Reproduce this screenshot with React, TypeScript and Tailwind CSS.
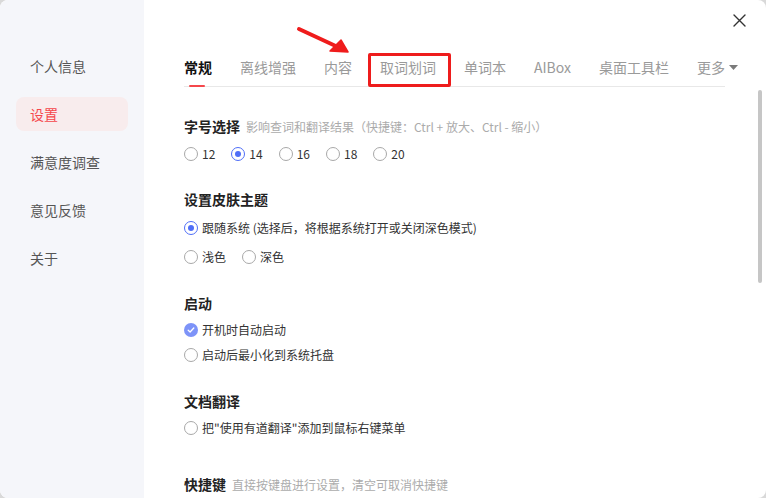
import React from "react";

const menu = ["个人信息", "设置", "满意度调查", "意见反馈", "关于"];
const tabs = ["常规", "离线增强", "内容", "取词划词", "单词本", "AIBox", "桌面工具栏"];

function Radio({ checked = false, label }: { checked?: boolean; label: string }) {
  return (
    <label className="flex items-center gap-[4px] h-[20px] whitespace-nowrap">
      <span
        className={
          checked
            ? "flex h-[14px] w-[14px] items-center justify-center rounded-full border border-[#4f6ef7]"
            : "h-[14px] w-[14px] rounded-full border border-[#a8a8a8]"
        }
      >
        {checked && <span className="h-[6px] w-[6px] rounded-full bg-[#4f6ef7]" />}
      </span>
      <span className="text-[12px] leading-[20px] text-[#333]">{label}</span>
    </label>
  );
}

function Check({ label }: { label: string }) {
  return (
    <label className="flex items-center gap-[4px] h-[20px] whitespace-nowrap">
      <span className="flex h-[14px] w-[14px] items-center justify-center rounded-full bg-[#7d93f8]">
        <svg width="8" height="8" viewBox="0 0 8 8" fill="none">
          <path d="M1.2 4.2 3.1 6 6.8 2" stroke="#fff" strokeWidth="1.3" strokeLinecap="round" strokeLinejoin="round" />
        </svg>
      </span>
      <span className="text-[12px] leading-[20px] text-[#333]">{label}</span>
    </label>
  );
}

function Title({ text, hint }: { text: string; hint?: string }) {
  return (
    <div className="flex items-baseline gap-[6px] h-[20px] leading-[20px] whitespace-nowrap">
      <span className="text-[14px] font-bold text-[#222]">{text}</span>
      {hint && <span className="text-[12px] text-[#ababab]">{hint}</span>}
    </div>
  );
}

export default function App() {
  return (
    <div className="h-[498px] w-[766px] bg-[#d9d9d9] font-['Noto_Sans_CJK_SC','Noto_Sans',sans-serif]">
      <div className="relative flex h-full w-full overflow-hidden rounded-[8px] bg-white">
        <aside className="flex w-[144px] shrink-0 flex-col gap-[14px] bg-[#f5f6fa] px-[16px] pt-[49px]">
          {menu.map((m) => (
            <div
              key={m}
              className={
                m === "设置"
                  ? "flex h-[34px] items-center rounded-[8px] bg-[#f8eced] pl-[14px] text-[14px] text-[#f5474b]"
                  : "flex h-[34px] items-center pl-[14px] text-[14px] text-[#555]"
              }
            >
              {m}
            </div>
          ))}
        </aside>

        <main className="min-w-0 flex-1 pl-[40px] pr-[41px] pt-[54px]">
          <div className="flex h-[33px] gap-[28px] border-b border-[#e8e8e8]">
            {tabs.map((t, i) => (
              <div
                key={t}
                className={
                  i === 0
                    ? "relative shrink-0 whitespace-nowrap pt-[3px] text-[14px] leading-[20px] font-bold text-[#111]"
                    : "relative shrink-0 whitespace-nowrap pt-[3px] text-[14px] leading-[20px] text-[#9a9a9a]"
                }
              >
                {t}
                {i === 0 && (
                  <span className="absolute bottom-[-1px] left-[5px] h-[2px] w-[16px] rounded-full bg-[#f5474b]" />
                )}
                {t === "取词划词" && (
                  <span className="absolute left-[-12px] right-[-15px] top-[-1px] bottom-[-1px] rounded-[2px] border-[3px] border-[#ee1c1c]" />
                )}
              </div>
            ))}
            <div className="flex shrink-0 items-start gap-[4px] whitespace-nowrap pt-[3px] text-[14px] leading-[20px] text-[#9a9a9a]">
              更多
              <svg className="mt-[8px]" width="9" height="5" viewBox="0 0 9 5">
                <path d="M0 0h9L4.5 5z" fill="#7a7a7a" />
              </svg>
            </div>
          </div>

          <div className="mt-[29px]">
            <Title text="字号选择" hint="影响查词和翻译结果（快捷键：Ctrl + 放大、Ctrl - 缩小）" />
          </div>
          <div className="mt-[8px] flex gap-[16px]">
            <Radio label="12" />
            <Radio label="14" checked />
            <Radio label="16" />
            <Radio label="18" />
            <Radio label="20" />
          </div>

          <div className="mt-[25px]">
            <Title text="设置皮肤主题" />
          </div>
          <div className="mt-[9px]">
            <Radio label="跟随系统 (选择后，将根据系统打开或关闭深色模式)" checked />
          </div>
          <div className="mt-[9px] flex gap-[16px]">
            <Radio label="浅色" />
            <Radio label="深色" />
          </div>

          <div className="mt-[26px]">
            <Title text="启动" />
          </div>
          <div className="mt-[7px]">
            <Check label="开机时自动启动" />
          </div>
          <div className="mt-[5px]">
            <Radio label="启动后最小化到系统托盘" />
          </div>

          <div className="mt-[26px]">
            <Title text="文档翻译" />
          </div>
          <div className="mt-[7px]">
            <Radio label={'把"使用有道翻译"添加到鼠标右键菜单'} />
          </div>

          <div className="mt-[36px]">
            <Title text="快捷键" hint="直接按键盘进行设置，清空可取消快捷键" />
          </div>
        </main>

        {/* close button */}
        <button className="absolute left-[732px] top-[13px] flex h-[14px] w-[14px] items-center justify-center">
          <svg width="13" height="13" viewBox="0 0 13 13">
            <path d="M1 1l11 11M12 1L1 12" stroke="#333" strokeWidth="1.4" strokeLinecap="round" />
          </svg>
        </button>

        {/* scrollbar */}
        <div className="absolute left-[758px] top-[90px] h-[193px] w-[4px] rounded-full bg-[#c6c6c6]" />

        {/* annotation arrow */}
        <svg className="pointer-events-none absolute left-0 top-0" width="766" height="498">
          <path d="M299 29 L340 48" stroke="#ef1c1c" strokeWidth="4" strokeLinecap="round" />
          <path d="M348 52 L330 51 L341 40 Z" fill="#ef1c1c" stroke="#ef1c1c" strokeWidth="1.5" strokeLinejoin="round" />
        </svg>
      </div>
    </div>
  );
}
